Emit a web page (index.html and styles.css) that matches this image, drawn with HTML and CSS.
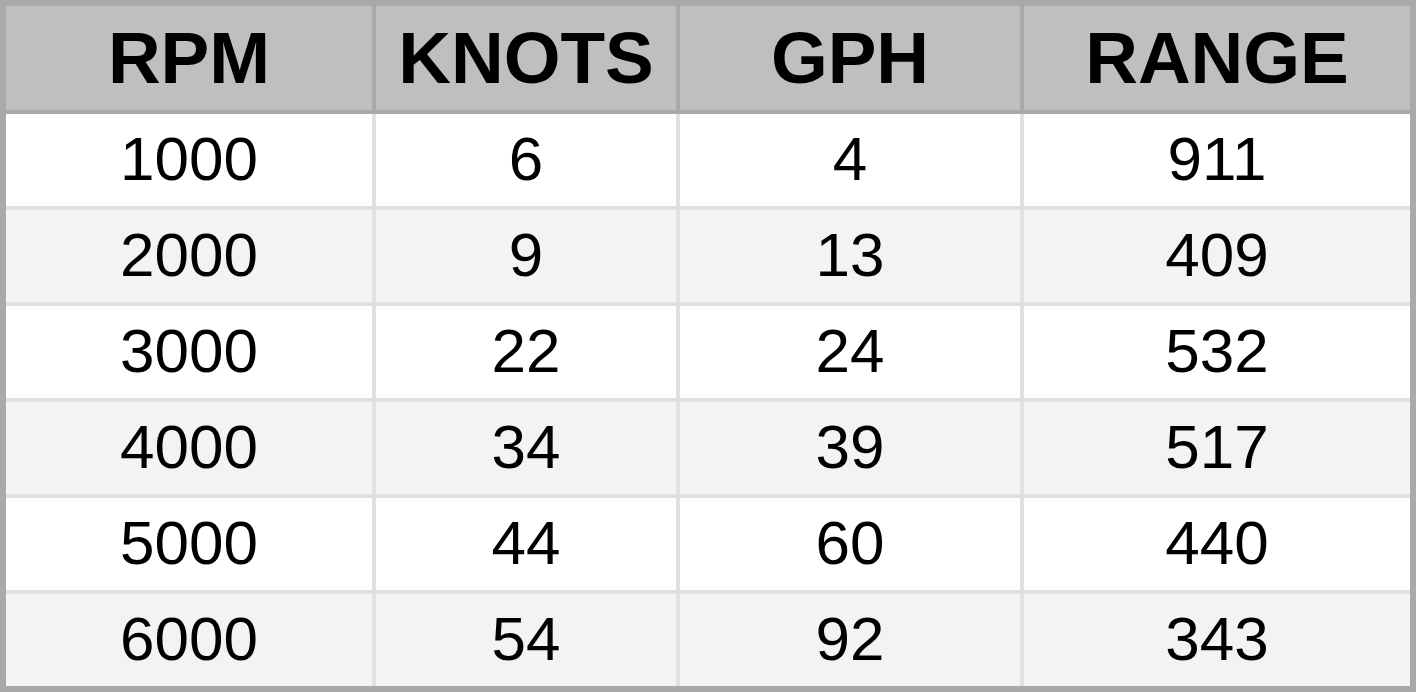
FILE: index.html
```html
<!DOCTYPE html>
<html>
<head>
<meta charset="utf-8">
<link rel="stylesheet" href="styles.css">
</head>
<body>
<div class="table">
  <div class="head">
    <div class="hcell">RPM</div>
    <div class="hcell">KNOTS</div>
    <div class="hcell">GPH</div>
    <div class="hcell">RANGE</div>
  </div>
  <div class="rows">
    <div class="cell">1000</div><div class="cell">6</div><div class="cell">4</div><div class="cell">911</div>
    <div class="cell alt">2000</div><div class="cell alt">9</div><div class="cell alt">13</div><div class="cell alt">409</div>
    <div class="cell">3000</div><div class="cell">22</div><div class="cell">24</div><div class="cell">532</div>
    <div class="cell alt">4000</div><div class="cell alt">34</div><div class="cell alt">39</div><div class="cell alt">517</div>
    <div class="cell">5000</div><div class="cell">44</div><div class="cell">60</div><div class="cell">440</div>
    <div class="cell alt">6000</div><div class="cell alt">54</div><div class="cell alt">92</div><div class="cell alt">343</div>
  </div>
</div>
</body>
</html>
```
FILE: styles.css
```css
html, body {
  margin: 0;
  padding: 0;
  background: #ffffff;
}
.table {
  width: 1416px;
  height: 692px;
  box-sizing: border-box;
  border: 6px solid #a9a9a9;
  display: flex;
  flex-direction: column;
  font-family: "Liberation Sans", Arial, sans-serif;
  color: #000;
}
.head {
  display: grid;
  grid-template-columns: 366px 300px 340px 386px;
  column-gap: 4px;
  background: #a9a9a9;
  border-bottom: 4px solid #a9a9a9;
  height: 104px;
}
.hcell {
  background: #bfbfbf;
  font-weight: bold;
  font-size: 73px;
  display: flex;
  align-items: center;
  justify-content: center;
  padding-bottom: 2px;
  box-sizing: border-box;
}
.rows {
  display: grid;
  grid-template-columns: 366px 300px 340px 386px;
  grid-auto-rows: 92px;
  gap: 4px;
  background: #e0e0e0;
}
.cell {
  background: #ffffff;
  font-size: 62px;
  display: flex;
  align-items: center;
  justify-content: center;
  padding-bottom: 4px;
  box-sizing: border-box;
}
.cell.alt {
  background: #f3f3f3;
}
```
